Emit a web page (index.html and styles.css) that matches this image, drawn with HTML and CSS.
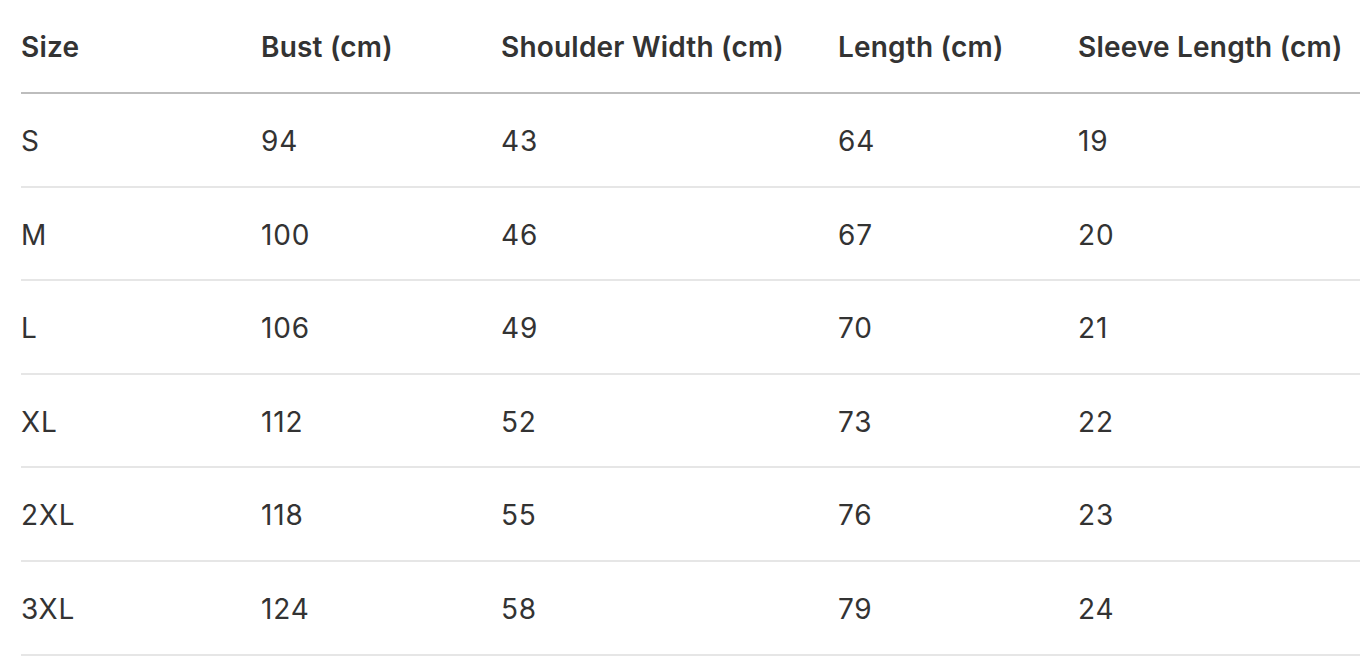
FILE: index.html
```html
<!DOCTYPE html>
<html lang="en">
<head>
<meta charset="utf-8">
<title>Size Chart</title>
<link rel="stylesheet" href="styles.css">
</head>
<body>
<div class="wrap">
<table class="size-table">
  <colgroup>
    <col class="c-size"><col class="c-bust"><col class="c-shoulder"><col class="c-length"><col class="c-sleeve">
  </colgroup>
  <thead>
    <tr><th>Size</th><th>Bust (cm)</th><th>Shoulder Width (cm)</th><th>Length (cm)</th><th>Sleeve Length (cm)</th></tr>
  </thead>
  <tbody>
    <tr><td>S</td><td>94</td><td>43</td><td>64</td><td>19</td></tr>
    <tr><td>M</td><td>100</td><td>46</td><td>67</td><td>20</td></tr>
    <tr><td>L</td><td>106</td><td>49</td><td>70</td><td>21</td></tr>
    <tr><td>XL</td><td>112</td><td>52</td><td>73</td><td>22</td></tr>
    <tr><td>2XL</td><td>118</td><td>55</td><td>76</td><td>23</td></tr>
    <tr><td>3XL</td><td>124</td><td>58</td><td>79</td><td>24</td></tr>
  </tbody>
</table>
</div>
</body>
</html>
```
FILE: styles.css
```css
html, body {
  margin: 0;
  padding: 0;
  background: #ffffff;
  overflow: hidden;
}
.wrap {
  padding-left: 21px;
}
.size-table {
  border-collapse: collapse;
  table-layout: fixed;
  width: 1360px;
  font-family: Inter, "Liberation Sans", sans-serif;
  font-size: 28px;
  color: #333333;
}
.c-size { width: 240px; }
.c-bust { width: 240px; }
.c-shoulder { width: 337px; }
.c-length { width: 240px; }
.c-sleeve { width: 303px; }
.size-table th {
  text-align: left;
  font-weight: 600;
  letter-spacing: 0.2px;
  line-height: 32px;
  padding: 31px 0 29px;
  border-bottom: 2px solid #bdbdbd;
  white-space: nowrap;
}
.size-table td {
  text-align: left;
  font-weight: 400;
  letter-spacing: 0.8px;
  line-height: 32px;
  padding: 31px 0 28.6px;
  border-bottom: 2px solid #e6e6e6;
  white-space: nowrap;
}
```
